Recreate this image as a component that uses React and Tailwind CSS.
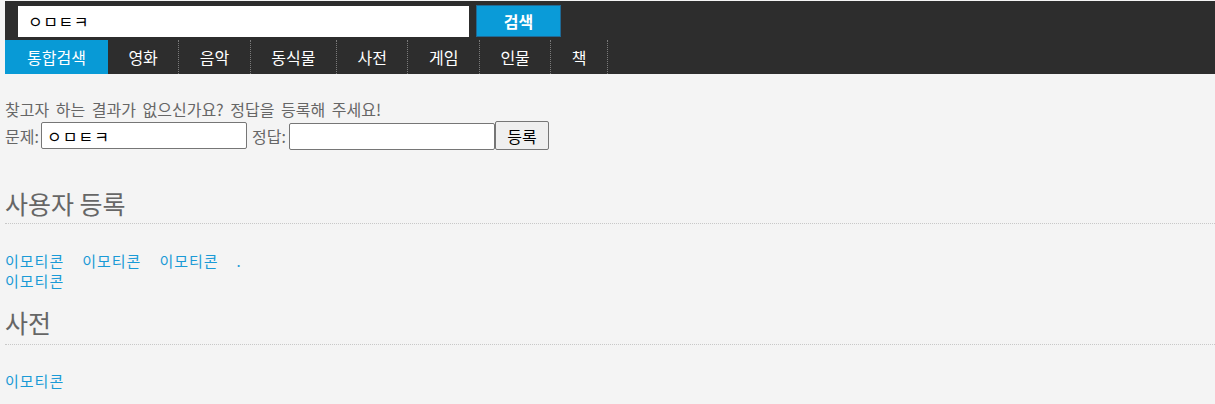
const tabs = ["통합검색", "영화", "음악", "동식물", "사전", "게임", "인물", "책"];

export default function App() {
  return (
    <div
      className="min-h-screen bg-[#f4f4f4] pl-[5px] pt-[1px] text-[#666]"
      style={{ fontFamily: '"Noto Sans CJK KR", "Noto Sans", sans-serif' }}
    >
      <header className="bg-[#2d2d2d]">
        <div className="flex items-center h-[39px] pl-[13px] pt-[1px]">
          <input
            className="w-[451px] h-[31px] bg-white px-[10px] text-[16px] tracking-[0.5px] text-black outline-none"
            defaultValue="ㅇㅁㅌㅋ"
          />
          <button className="ml-[7px] w-[85px] h-[32px] -mt-[1px] bg-[#0a9bd8] border border-[#1f6a96] text-white text-[16px] font-bold">
            검색
          </button>
        </div>
        <nav className="flex h-[34px]">
          {tabs.map((t, i) => (
            <a
              key={t}
              className={
                i === 0
                  ? "flex items-center px-[22px] bg-[#089ad6] text-white text-[16px]"
                  : "flex items-center px-[20.5px] border-r border-dotted border-[#7a7a7a] text-white text-[16px]"
              }
            >
              {t}
            </a>
          ))}
        </nav>
      </header>

      <p className="mt-[26px] text-[16px] leading-[18px] [word-spacing:3px]">
        찾고자 하는 결과가 없으신가요? 정답을 등록해 주세요!
      </p>
      <div className="flex items-center h-[29px] mt-[3px] text-[16px]">
        <span className="w-[36px]">문제:</span>
        <input
          className="w-[206px] h-[27px] border border-[#767676] rounded-[2px] bg-white px-[5px] text-[16px] tracking-[1px] text-black"
          defaultValue="ㅇㅁㅌㅋ"
        />
        <span className="ml-[5px] w-[37px]">정답:</span>
        <input className="w-[206px] h-[27px] mt-[2px] border border-[#767676] rounded-[2px] bg-white" />
        <button className="w-[54px] h-[29px] border border-[#767676] rounded-[2px] bg-[#efefef] text-black text-[16px]">
          등록
        </button>
      </div>

      <h2 className="mt-[39px] text-[25px] leading-[28px] pb-[6px] border-b border-dotted border-[#c8c8c8]">
        사용자 등록
      </h2>
      <div className="mt-[27px] text-[15px] tracking-[1px] leading-[20px] text-[#1a9ad6]">
        <div className="flex gap-[18px]">
          <a>이모티콘</a>
          <a>이모티콘</a>
          <a>이모티콘</a>
          <a>.</a>
        </div>
        <div>
          <a>이모티콘</a>
        </div>
      </div>

      <h2 className="mt-[17px] text-[25px] leading-[28px] pb-[8px] border-b border-dotted border-[#c8c8c8]">
        사전
      </h2>
      <div className="mt-[26px] text-[15px] tracking-[1px] leading-[20px] text-[#1a9ad6]">
        <a>이모티콘</a>
      </div>
    </div>
  );
}
